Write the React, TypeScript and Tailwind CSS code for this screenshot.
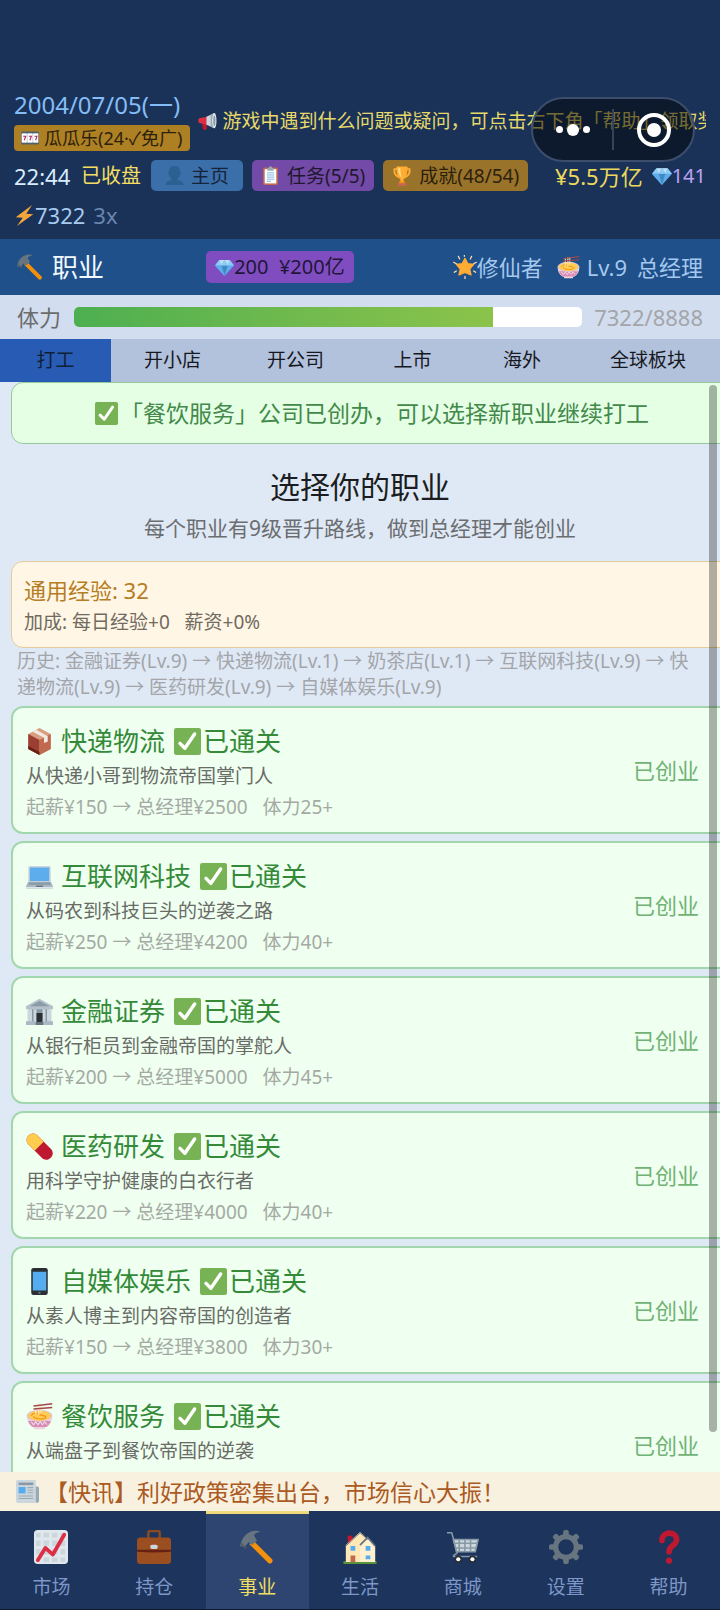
import type { ReactNode } from "react";

type IconName =
  | "slots" | "megaphone" | "bust" | "clipboard" | "trophy" | "gem" | "bolt" | "hammer"
  | "star" | "noodles" | "check" | "package" | "laptop" | "bank" | "pill" | "phone"
  | "news" | "chart" | "briefcase" | "house" | "cart" | "gear" | "question";

const art: Record<IconName, ReactNode> = {
  slots: (
    <>
      <rect y="5" width="36" height="26" rx="3" fill="#50606c" />
      <rect x="1" y="9" width="34" height="18" fill="#c6ced4" />
      {[2, 13.3, 24.6].map((x) => (
        <g key={x}>
          <rect x={x} y="9" width="9.4" height="18" fill="#fff" />
          <path d={`M${x + 2.4} 14.5h5l-2.8 8`} fill="none" stroke="#a92b63" strokeWidth="2.2" />
        </g>
      ))}
    </>
  ),
  megaphone: (
    <>
      <path d="M8 21h8l1 10c0 2-2 3-4 3s-4-1-4-3z" fill="#be1931" />
      <path d="M2 12 17 9v15L2 21c-2-2-2-7 0-9z" fill="#dd2e44" />
      <path d="M16 9 31 2v29L16 24z" fill="#ccd6dd" />
      <path d="M24 5.500 31 2v29l-7-3.500z" fill="#99aab5" />
      <ellipse cx="31" cy="16.500" rx="4" ry="14.500" fill="#e1e8ed" />
      <ellipse cx="31" cy="16.500" rx="2" ry="10" fill="#8899a6" />
    </>
  ),
  bust: (
    <path d="M24 26.800v-2.600c2.200-1.600 3.600-4.200 4-7 1.300-.2 2-1.500 2-3 0-1.200-.4-2.300-1.400-2.600C29.400 5.300 26.500 0 18 0S6.600 5.300 7.400 11.600C6.400 11.900 6 13 6 14.200c0 1.500.7 2.800 2 3 .4 2.800 1.800 5.400 4 7v2.600C5.500 27.800 1 30 1 36h34c0-6-4.500-8.200-11-9.200z" fill="#2c6093" />
  ),
  clipboard: (
    <>
      <rect x="4" y="3" width="28" height="33" rx="3" fill="#c1694f" />
      <path d="M7 6h22v27H7z" fill="#fff" />
      <path d="M12 4h3c0-5 6-5 6 0h3v5H12z" fill="#99aab5" />
      <path d="M11 13h14M11 17h14M11 21h14M11 25h14M11 29h8" stroke="#68a9dc" strokeWidth="1.600" />
    </>
  ),
  trophy: (
    <>
      <path d="M3 4h6v3H6c0 6 2 9 7 11v4C5 19 1 13 3 4zm30 0h-6v3h3c0 6-2 9-7 11v4c8-3 12-9 10-18z" fill="#ffac33" />
      <path d="M8 1h20c0 12-2 20-7 23v6h-6v-6C10 21 8 13 8 1z" fill="#ffac33" />
      <path d="M11 3h4c0 8 1 14 3 18-5-3-7-9-7-18z" fill="#ffd983" />
      <path d="M10 30h16v6H10z" fill="#c1694f" />
      <path d="M13 28h10v3H13z" fill="#f4900c" />
    </>
  ),
  gem: (
    <>
      <path d="M8 4h20l8 10-18 20L0 14z" fill="#5dadec" />
      <path d="m8 4 4 10H0zM28 4l-4 10h12z" fill="#8ccaf7" />
      <path d="M12 14h12l-6 20z" fill="#4289c1" />
      <path d="M8 4h10l-6 10zm20 0H18l6 10z" fill="#bdddf4" />
      <path d="m18 4-6 10h12z" fill="#8ccaf7" />
      <path d="m0 14h12l6 20z" fill="#5dadec" />
    </>
  ),
  bolt: <path d="M31 0 3 21l12 1L5 36l28-20-12-1z" fill="#f2a63b" />,
  hammer: (
    <>
      <path d="M14 11 34 31c2 3-2 6-4 4L10 15z" fill="#f4900c" />
      <path d="M1 14C2 9 7 2 14 1c3-.5 6 0 8 1-4 0-7 2-7 4l3 5-5 5-4-3-4 5-5-1z" fill="#66757f" />
      <path d="m1 13 6 6-1 1-6-5z" fill="#4f5d66" />
    </>
  ),
  star: (
    <>
      <path d="m18 5 4 8 9 1-6 7 2 9-9-4-9 4 2-9-6-7 9-1z" fill="#ffac33" stroke="#ffac33" strokeWidth="2" strokeLinejoin="round" />
      <path d="M17 0v2M28 2l-2 4M8 2l2 4M1 11l4 2M35 11l-4 2M34 26l-3-2M2 26l3-2M18 32v4" stroke="#ffe8b6" strokeWidth="1.800" strokeLinecap="round" />
    </>
  ),
  noodles: (
    <>
      <path d="M1 17h34c0 9-4 14-10 16v2H11v-2C5 31 1 26 1 17z" fill="#ead7df" />
      <path d="M3 24h30c-1 3-3 6-6 8H9c-3-2-5-5-6-8z" fill="#d98bb4" />
      <path d="M7 25l3 4 3-4 3 4 3-4 3 4 3-4 3 4" fill="none" stroke="#efd9e6" strokeWidth="1.500" />
      <ellipse cx="18" cy="17" rx="17" ry="8" fill="#dfc5d2" />
      <ellipse cx="18" cy="17" rx="15" ry="6.500" fill="#ffcc4d" />
      <path d="M7 17c2-4 7-4 10-2s7 1 9 3-4 4-9 3-7-1-7-3" fill="none" stroke="#f19020" strokeWidth="1.500" />
      <path d="M13 3v12M17 2v14M20 2v11" stroke="#ffe8b6" strokeWidth="1.700" />
      <path d="M10 4 35 1M10 8l25-2" stroke="#a0484a" strokeWidth="1.700" />
    </>
  ),
  check: (
    <>
      <rect width="36" height="36" rx="3" fill="#77b255" />
      <path d="M8 20.500 14.500 27 27.500 8" fill="none" stroke="#fff" strokeWidth="4.600" strokeLinecap="round" strokeLinejoin="round" />
    </>
  ),
  package: (
    <>
      <path d="m18 0 15 8v20l-15 8L3 28V8z" fill="#d99e82" />
      <path d="m3 8 15 8v20L3 28z" fill="#9b3f32" />
      <path d="m18 16 15-8v20l-15 8z" fill="#c1694f" />
      <path d="m9 5 4-3 16 9v7l-5 2v-7z" fill="#f1e8e2" />
      <path d="m3 24 15 8v4L3 28z" fill="#662113" />
    </>
  ),
  laptop: (
    <>
      <path d="M5 4h26c1 0 2 1 2 2v20H3V6c0-1 1-2 2-2z" fill="#ccd6dd" />
      <path d="M5 6h26v18H5z" fill="#5dadec" />
      <path d="M3 25h30l3 6v2c0 1-1 1-2 1H2c-1 0-2 0-2-1v-2z" fill="#aab8c2" />
      <path d="M4 26h28l1 3H3z" fill="#899aa7" />
      <path d="M14 30h8l1 2H13z" fill="#66757f" />
      <path d="M0 32h36v1.500H0z" fill="#e1e8ed" />
    </>
  ),
  bank: (
    <>
      <path d="M4 13h28v19H4z" fill="#8899a6" />
      <path d="M18 1 36 11v4H0v-4z" fill="#b4c1ca" />
      <path d="M18 4 31 11H5z" fill="#8a9ba8" />
      <path d="M2 15h6v17H2zM10 15h4v17h-4zM22 15h4v17h-4zM28 15h6v17h-6z" fill="#ccd6dd" />
      <path d="M14 20h8v12h-8z" fill="#292f33" />
      <path d="M0 31h14v5H0zM22 31h14v5H22z" fill="#aab8c2" />
      <path d="M13 32h10v4H13z" fill="#66757f" />
    </>
  ),
  pill: (
    <>
      <path d="M3 15C-4 7 7-4 15 3l18 18c8 8-4 20-12 12z" fill="#be1931" />
      <path d="M3 15C-4 7 7-4 15 3l8.500 8.500-12 12z" fill="#ffcc4d" />
    </>
  ),
  phone: (
    <>
      <rect x="7" width="22" height="36" rx="3" fill="#292f33" />
      <path d="M9 5h18v25H9z" fill="#55acee" />
      <circle cx="18" cy="33" r="1.600" fill="#5c6c78" />
    </>
  ),
  news: (
    <>
      <path d="M29 10h4c2 0 3 1 3 3v20c0 2-2 3-5 3H8z" fill="#99aab5" />
      <path d="M3 0h26c2 0 2 1 2 3v30c0 2 1 3 2 3H4c-3 0-4-2-4-4V3c0-2 1-3 3-3z" fill="#ccd6dd" />
      <path d="M4 4h23v4H4z" fill="#8999a5" />
      <path d="M4 11h11v10H4z" fill="#55acee" />
      <path d="M18 12h9M18 16h9M18 20h9M4 25h23M4 29h23" stroke="#99aab5" strokeWidth="1.800" />
    </>
  ),
  chart: (
    <>
      <rect width="36" height="36" rx="4" fill="#e1e8ed" />
      <path d="M2 3h5v5H2zm8 0h6v5h-6zm9 0h6v5h-6zm9 0h5v5h-5zM2 11h5v6H2zm8 0h6v6h-6zm9 0h6v6h-6zm9 0h5v6h-5zM2 20h5v6H2zm8 0h6v6h-6zm9 0h6v6h-6zm9 0h5v6h-5zM10 29h6v5h-6zm9 0h6v5h-6zm9 0h5v5h-5z" fill="#ccd6dd" />
      <path d="m4 32 8-13 8 7L32 5" fill="none" stroke="#dd2e44" strokeWidth="4" strokeLinecap="round" strokeLinejoin="round" />
    </>
  ),
  briefcase: (
    <>
      <path d="M12 10V3c0-1 1-2 2-2h8c1 0 2 1 2 2v7" fill="none" stroke="#8a4b22" strokeWidth="2.600" />
      <path d="M4 8h28c3 0 4 1 4 4v20c0 3-1 4-4 4H4c-3 0-4-1-4-4V12c0-3 1-4 4-4z" fill="#9b4f20" />
      <path d="M0 21h36v2c-12 1-24 1-36 0z" fill="#662113" />
      <rect x="14" y="15.500" width="8" height="4.500" rx="2" fill="#ccd6dd" />
    </>
  ),
  house: (
    <>
      <path d="M1 33h34c1 0 1 3 0 3H1c-1 0-1-3 0-3z" fill="#5c913b" />
      <path d="M5 6h5v10H5z" fill="#be1931" />
      <path d="M3 16 18 2l16 15v17H3z" fill="#ffe8b6" />
      <path d="M18 16 26 8l8 9v17H18z" fill="#fff0cf" />
      <path d="M3 17 18 3l8 7" fill="none" stroke="#66757f" strokeWidth="1" strokeLinejoin="round" />
      <path d="m18 16 8-8 8 9" fill="none" stroke="#66757f" strokeWidth="1.800" />
      <path d="M8 17h5v5H8zM24 17h5v5h-5zM24 27h5v4h-5z" fill="#55acee" />
      <path d="M8 27h5v7H8z" fill="#c1694f" />
    </>
  ),
  cart: (
    <>
      <path d="M1 3h5l6 20c1 3-5 2-4 5h25" fill="none" stroke="#8899a6" strokeWidth="1.600" />
      <path d="M7 10h27l-3 13H11z" fill="#ccd6dd" />
      <path d="M8 10h26l-3 13H11zM8 14h25M10 19h22M14 10v13M20 10v13M26 10v13" fill="none" stroke="#8899a6" strokeWidth="1.700" />
      <circle cx="13" cy="31" r="4" fill="#292f33" />
      <circle cx="28" cy="31" r="4" fill="#292f33" />
      <circle cx="13" cy="31" r="2.200" fill="#fff" />
      <circle cx="28" cy="31" r="2.200" fill="#fff" />
    </>
  ),
  gear: (
    <>
      <circle cx="18" cy="18" r="11" fill="none" stroke="#66757f" strokeWidth="5.500" />
      {[0, 45, 90, 135, 180, 225, 270, 315].map((angle) => (
        <rect key={angle} x="15" y="0" width="6" height="8" rx="2" fill="#66757f" transform={`rotate(${angle} 18 18)`} />
      ))}
    </>
  ),
  question: (
    <>
      <path d="M10.500 11C10.500 1 26 1 26 10c0 7-8 6-8 13" fill="none" stroke="#be1931" strokeWidth="6" strokeLinecap="round" />
      <circle cx="18" cy="32.500" r="3.300" fill="#be1931" />
    </>
  ),
};

function Icon({ name, className }: { name: IconName; className: string }) {
  return (
    <svg viewBox="0 0 36 36" aria-hidden="true" className={`inline-block shrink-0 ${className}`}>
      {art[name]}
    </svg>
  );
}

const tabs = ["打工", "开小店", "开公司", "上市", "海外", "全球板块"];

type Job = { icon: IconName; name: string; desc: string; pay?: { start: number; top: number; energy: number } };

const jobs: Job[] = [
  { icon: "package", name: "快递物流", desc: "从快递小哥到物流帝国掌门人", pay: { start: 150, top: 2500, energy: 25 } },
  { icon: "laptop", name: "互联网科技", desc: "从码农到科技巨头的逆袭之路", pay: { start: 250, top: 4200, energy: 40 } },
  { icon: "bank", name: "金融证券", desc: "从银行柜员到金融帝国的掌舵人", pay: { start: 200, top: 5000, energy: 45 } },
  { icon: "pill", name: "医药研发", desc: "用科学守护健康的白衣行者", pay: { start: 220, top: 4000, energy: 40 } },
  { icon: "phone", name: "自媒体娱乐", desc: "从素人博主到内容帝国的创造者", pay: { start: 150, top: 3800, energy: 30 } },
  { icon: "noodles", name: "餐饮服务", desc: "从端盘子到餐饮帝国的逆袭" },
];

const nav: { icon: IconName; label: string }[] = [
  { icon: "chart", label: "市场" },
  { icon: "briefcase", label: "持仓" },
  { icon: "hammer", label: "事业" },
  { icon: "house", label: "生活" },
  { icon: "cart", label: "商城" },
  { icon: "gear", label: "设置" },
  { icon: "question", label: "帮助" },
];

function StatusHeader() {
  return (
    <header className="relative flex h-[239px] shrink-0 flex-col bg-[#1a3258] px-[14px] pt-[91px]">
      <div className="flex items-center">
        <div className="flex shrink-0 flex-col items-start gap-[6px]">
          <div className="text-[24px] leading-[28px] text-[#84bdf5]">2004/07/05(一)</div>
          <button className="flex h-[26px] items-center gap-[5px] rounded bg-[#ad8023] px-[7px] text-[18px] leading-[24px] text-[#2c210d]">
            <Icon name="slots" className="size-[18px]" />
            瓜瓜乐(24·✓免广)
          </button>
        </div>
        <div className="ml-2 flex min-w-0 flex-1 items-center gap-[6px] overflow-hidden text-[19px] leading-[28px] whitespace-nowrap text-[#e8d968]">
          <Icon name="megaphone" className="size-[19px]" />
          游戏中遇到什么问题或疑问，可点击右下角「帮助」领取奖励
        </div>
      </div>
      <div className="mt-[9px] flex h-[31px] items-center leading-[30px] whitespace-nowrap">
        <span className="w-[67px] text-[22px] text-[#d9ecff]">22:44</span>
        <span className="text-[20px] text-[#f3de62]">已收盘</span>
        <button className="ml-[10px] flex h-[31px] items-center gap-[7px] rounded-[5px] bg-[#3b6fa9] px-[14px] text-[19px] text-[#15243a]">
          <Icon name="bust" className="size-[19px]" />
          主页
        </button>
        <button className="ml-[9px] flex h-[31px] items-center gap-[7px] rounded-[5px] bg-[#734aa7] px-[9px] text-[19px] text-[#211830]">
          <Icon name="clipboard" className="size-[19px]" />
          任务(5/5)
        </button>
        <button className="ml-[9px] flex h-[31px] items-center gap-[7px] rounded-[5px] bg-[#99732a] px-[9px] text-[19px] text-[#2c210d]">
          <Icon name="trophy" className="size-[20px]" />
          成就(48/54)
        </button>
        <span className="ml-auto text-[22px] text-[#ecd95c]">¥5.5万亿</span>
        <span className="ml-[9px] flex items-center text-[20px] text-[#b9a3f2]">
          <Icon name="gem" className="size-[20px]" />
          141
        </span>
      </div>
      <div className="mt-[9px] flex h-[30px] items-center text-[22px] leading-[30px]">
        <Icon name="bolt" className="size-[21px]" />
        <span className="text-[#a7cbee]">7322</span>
        <span className="ml-2 text-[#6785ad]">3x</span>
      </div>
      <div className="absolute top-[97px] right-[25px] flex h-[65px] w-[164px] items-center rounded-full border-2 border-[#3d4e6c] bg-black/50">
        <button aria-label="更多" className="flex flex-1 items-center justify-center gap-[4px]">
          <span className="size-[7px] rounded-full bg-white" />
          <span className="size-[12px] rounded-full bg-white" />
          <span className="size-[7px] rounded-full bg-white" />
        </button>
        <span className="h-[41px] w-[2px] bg-[#35435d]" />
        <button aria-label="关闭" className="flex flex-1 items-center justify-center">
          <span className="flex size-[34px] items-center justify-center rounded-full border-4 border-white">
            <span className="size-[14px] rounded-full bg-white" />
          </span>
        </button>
      </div>
    </header>
  );
}

export default function App() {
  return (
    <div className="flex h-screen flex-col overflow-hidden bg-[#dfe9f6] font-['Noto_Sans','Noto_Sans_CJK_SC',sans-serif] font-normal">
      <StatusHeader />

      <div className="flex h-[56px] shrink-0 items-center bg-[#1f508a] px-[17px] leading-[30px] whitespace-nowrap">
        <div className="flex flex-1 items-center">
          <Icon name="hammer" className="size-[26px]" />
          <h1 className="ml-[9px] text-[26px] text-[#f2f9ff]">职业</h1>
        </div>
        <button className="flex h-[32px] items-center rounded-[5px] bg-[#804dc0] px-[9px] text-[20px] text-[#20163a]">
          <Icon name="gem" className="size-[19px]" />
          200&nbsp; ¥200亿
        </button>
        <div className="ml-[99px] flex items-center text-[22px] text-[#a5c8ef]">
          <Icon name="star" className="size-[24px]" />
          修仙者
          <Icon name="noodles" className="ml-[14px] mr-[7px] size-[23px]" />
          <span>Lv.9</span>
          <span className="ml-[10px]">总经理</span>
        </div>
      </div>

      <div className="flex h-[44px] shrink-0 items-center bg-[#d2def0] px-[17px] text-[22px] leading-[30px]">
        <span className="text-[#6c6c6c]">体力</span>
        <div className="ml-[13px] mr-[12px] h-[20px] flex-1 overflow-hidden rounded-[5px] bg-white">
          <div
            className="h-full bg-linear-to-r from-[#4caf50] to-[#8bc34a]"
            style={{ width: `${(7322 / 8888) * 100}%` }}
          />
        </div>
        <span className="text-[#a3a5a9]">7322/8888</span>
      </div>

      <div className="grid h-[43px] shrink-0 grid-cols-[37fr_41fr_41fr_37fr_36fr_48fr] bg-[#b2c1dc] text-[19px] text-[#16191f]">
        {tabs.map((tab, i) => (
          <button key={tab} className={i === 0 ? "bg-[#285cb4] text-[#121e36]" : ""}>
            {tab}
          </button>
        ))}
      </div>

      <main className="relative min-h-0 flex-1 overflow-hidden">
        <div className="-mr-[13px] ml-[11px] flex h-[62px] items-center justify-center rounded-xl border border-[#96c99c] bg-[#e5ffe5] text-[23px] leading-[30px] text-[#43894a]">
          <Icon name="check" className="mr-[2px] size-[23px]" />
          「餐饮服务」公司已创办，可以选择新职业继续打工
        </div>

        <div className="flex flex-col items-center pt-[23px] pb-[19px]">
          <h2 className="text-[30px] leading-[40px] text-[#1b1d20]">选择你的职业</h2>
          <p className="mt-[7px] text-[21px] leading-[28px] text-[#6b6d70]">每个职业有9级晋升路线，做到总经理才能创业</p>
        </div>

        <div className="-mr-[13px] ml-[11px] h-[87px] rounded-xl border border-[#e3cb9b] bg-[#fff6e5] px-3 pt-[12px]">
          <div className="text-[22px] leading-[32px] text-[#b57d24]">通用经验: 32</div>
          <div className="text-[19px] leading-[32px] text-[#706a60]">加成: 每日经验+0&nbsp;&nbsp; 薪资+0%</div>
        </div>

        <p className="px-[17px] text-[19px] leading-[26px] text-[#a3a5a9]">
          历史: 金融证券(Lv.9) → 快递物流(Lv.1) → 奶茶店(Lv.1) → 互联网科技(Lv.9) → 快递物流(Lv.9) → 医药研发(Lv.9) →
          自媒体娱乐(Lv.9)
        </p>

        <ul className="mt-[6px] -mr-[13px] ml-[11px] flex flex-col gap-[7px]">
          {jobs.map((job) => (
            <li
              key={job.name}
              className="flex h-[128px] items-center justify-between rounded-xl border-2 border-[#a2d7ad] bg-[#effff0] pr-[32px] pl-[13px]"
            >
              <div className="h-full pt-[13px]">
                <h3 className="flex items-center text-[26px] leading-[40px] text-[#348a39]">
                  <Icon name={job.icon} className="mr-2 size-[27px]" />
                  {job.name}
                  <Icon name="check" className="mr-[2px] ml-[9px] size-[27px]" />
                  已通关
                </h3>
                <p className="text-[19px] leading-[31px] text-[#686b66]">{job.desc}</p>
                {job.pay && (
                  <p className="text-[19px] leading-[30px] text-[#a4aaa3]">
                    起薪¥{job.pay.start} → 总经理¥{job.pay.top}&nbsp;&nbsp; 体力{job.pay.energy}+
                  </p>
                )}
              </div>
              <span className="text-[22px] leading-[28px] text-[#70b374]">已创业</span>
            </li>
          ))}
        </ul>

        <div className="absolute top-[3px] right-[3px] bottom-[40px] w-2 rounded-full bg-black/30" />
      </main>

      <div className="flex h-[39px] shrink-0 items-center bg-[#f8f1e0] px-4 text-[23px] leading-[30px] text-[#ab5a23]">
        <Icon name="news" className="mr-[6px] size-[23px]" />
        【快讯】利好政策密集出台，市场信心大振！
      </div>

      <nav className="grid h-[99px] shrink-0 grid-cols-7 border-b border-[#0e1a30] bg-[#1d345c]">
        {nav.map((item, i) => (
          <a
            key={item.label}
            href={`#${item.icon}`}
            className={`flex flex-col items-center border-t-[3px] pt-[16px] text-[19px] leading-[28px] ${
              i === 2 ? "border-[#eedb78] bg-[#2e4571] text-[#f0de62]" : "border-transparent text-[#7d97c8]"
            }`}
          >
            <Icon name={item.icon} className="mb-[9px] size-[34px]" />
            {item.label}
          </a>
        ))}
      </nav>
    </div>
  );
}
